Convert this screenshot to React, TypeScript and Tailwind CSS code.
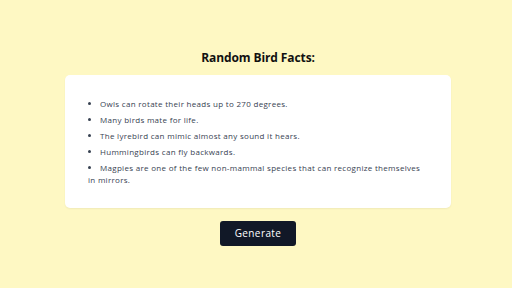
import React from "react";

const facts = [
  "Owls can rotate their heads up to 270 degrees.",
  "Many birds mate for life.",
  "The lyrebird can mimic almost any sound it hears.",
  "Hummingbirds can fly backwards.",
  "Magpies are one of the few non-mammal species that can recognize themselves in mirrors.",
];

export default function App() {
  return (
    <div
      className="min-h-screen w-full bg-[#fef8c3] flex flex-col items-center justify-center pt-[7px] pl-[4px]"
      style={{ fontFamily: '"Open Sans", Inter, sans-serif' }}
    >
      <h1 className="text-[12px] leading-[16px] font-bold text-[#111] mb-[9px] tracking-[-0.1px]">Random Bird Facts:</h1>
      <div className="w-[386px] bg-white rounded-[5px] shadow-[0_1px_2px_rgba(0,0,0,0.06)] pt-[23px] pb-[18px] px-[23px]">
        <ul className="list-disc list-inside text-[8px] leading-[12px] text-[#374151] tracking-[0.3px]">
          {facts.map((f) => (
            <li key={f} className="mb-[4px]">
              {f}
            </li>
          ))}
        </ul>
      </div>
      <button className="mt-[13px] w-[76px] h-[25px] rounded-[3px] bg-[#111827] text-white text-[10px] font-medium tracking-[0.4px]">
        Generate
      </button>
    </div>
  );
}
